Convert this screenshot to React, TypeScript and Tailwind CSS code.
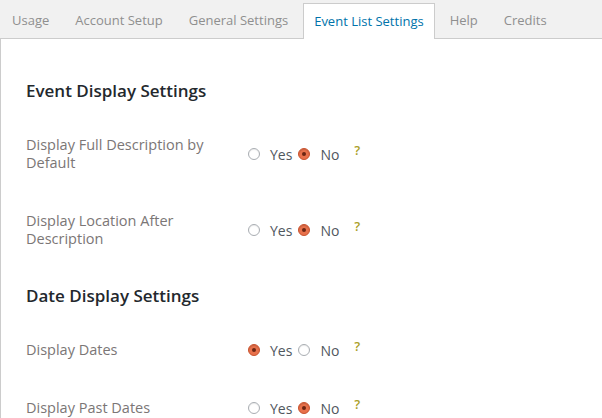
const tabs = ["Usage", "Account Setup", "General Settings", "Event List Settings", "Help", "Credits"];
const active = "Event List Settings";

type Row = { label: string; yes: boolean };

function Radio({ checked }: { checked: boolean }) {
  if (checked) {
    return (
      <span className="flex h-[12px] w-[12px] items-center justify-center rounded-full border border-[#c8532f] bg-[#e8714b] shadow-[inset_0_1px_1px_rgba(0,0,0,0.15)]">
        <span className="h-[4px] w-[4px] rounded-full bg-[#6b2614]" />
      </span>
    );
  }
  return <span className="h-[12px] w-[12px] rounded-full border border-[#a9adb2] bg-white shadow-[inset_0_1px_1px_rgba(0,0,0,0.08)]" />;
}

function SettingRow({ label, yes }: Row) {
  return (
    <div className="flex items-center">
      <div className="w-[222px] py-[20px] pr-[20px] text-[14.5px] leading-[18px] text-[#7b7676]">{label}</div>
      <div className="flex items-center text-[14px] text-[#50575e]">
        <Radio checked={yes} />
        <span className="ml-[10px] mr-[6px]">Yes</span>
        <Radio checked={!yes} />
        <span className="ml-[10px]">No</span>
        <span className="ml-[15px] -mt-[6px] text-[13px] font-semibold text-[#aaa02a]">?</span>
      </div>
    </div>
  );
}

export default function App() {
  return (
    <div className="h-[418px] w-[602px] overflow-hidden bg-[#f1f1f1] font-['Open_Sans',sans-serif]">
      <div className="flex h-[38px] items-end gap-[4px] pl-[1px]">
        {tabs.map((t) =>
          t === active ? (
            <div
              key={t}
              className="-mb-px flex h-[36px] items-center border border-b-0 border-[#cccccc] bg-white px-[10px] pt-[1px] text-[13px] text-[#0073aa]"
            >
              {t}
            </div>
          ) : (
            <div key={t} className="flex h-[35px] items-center border border-transparent px-[10px] pt-[1px] text-[13px] text-[#8f8f8f]">
              {t}
            </div>
          )
        )}
      </div>
      <div className="h-full border-l border-t border-[#cccccc] bg-white pl-[25px]">
        <h2 className="mt-[42px] mb-[15px] text-[17px] font-semibold leading-[20px] text-[#23282d]">Event Display Settings</h2>
        <SettingRow label="Display Full Description by Default" yes={false} />
        <SettingRow label="Display Location After Description" yes={false} />
        <h2 className="mt-[18px] mb-[15px] text-[17px] font-semibold leading-[20px] text-[#23282d]">Date Display Settings</h2>
        <SettingRow label="Display Dates" yes={true} />
        <SettingRow label="Display Past Dates" yes={false} />
      </div>
    </div>
  );
}
